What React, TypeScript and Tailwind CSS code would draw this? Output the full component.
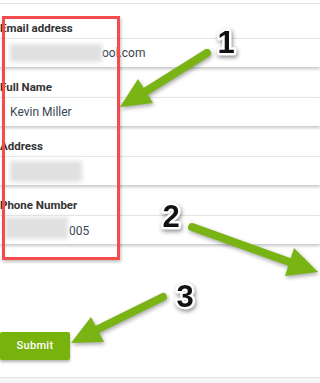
import React from 'react';

const fields = [
  { label: 'Email address', kind: 'email' },
  { label: 'Full Name', kind: 'name' },
  { label: 'Address', kind: 'address' },
  { label: 'Phone Number', kind: 'phone' },
];

// redacted bits of the screenshot
function FieldValue({ kind }: { kind: string }) {
  if (kind === 'email') {
    return (
      <div className="flex h-full items-center pl-[10px]">
        <div className="w-[92px] h-[18px] bg-[#e0e0e0] blur-[2px]" />
        <span>ool.com</span>
      </div>
    );
  }
  if (kind === 'name') {
    return (
      <div className="flex h-full items-center pl-[10px]">
        <span>Kevin Miller</span>
      </div>
    );
  }
  if (kind === 'address') {
    return (
      <div className="flex h-full items-center pl-[10px]">
        <div className="w-[72px] h-[21px] bg-[#e0e0e0] blur-[2px]" />
      </div>
    );
  }
  return (
    <div className="flex h-full items-center pl-[5px]">
      <div className="self-start mt-[1px] w-[63px] h-[22px] bg-[#e0e0e0] blur-[2px]" />
      <span className="ml-[1px] mt-[2px]">005</span>
    </div>
  );
}

function Arrow({ tail, tip, head }: { tail: [number, number]; tip: [number, number]; head: string }) {
  return (
    <g>
      <line x1={tail[0]} y1={tail[1]} x2={tip[0]} y2={tip[1]} stroke="#79b414" strokeWidth="8" strokeLinecap="round" />
      <polygon points={head} fill="#79b414" />
    </g>
  );
}

export default function App() {
  return (
    <div className="relative w-[320px] h-[383px] overflow-hidden bg-white font-['Roboto',sans-serif] flex flex-col">
      <div className="h-[4px] border-b border-[#e2e2e2]" />

      <form className="flex flex-col">
        {fields.map((f, i) => (
          <div key={f.label} className={`flex flex-col gap-[3px] ${i === 0 ? 'mt-[17px]' : 'mt-[13px]'}`}>
            <label className="h-[14px] leading-[14px] text-[11.5px] font-bold text-[#333]">{f.label}</label>
            <div className="h-[29px] bg-white border-t border-[#e6e6e6] shadow-[0_2px_3px_rgba(0,0,0,0.22)] text-[12px] text-[#3a4652]">
              <FieldValue kind={f.kind} />
            </div>
          </div>
        ))}

        <button
          type="button"
          className="mt-[88px] w-[70px] h-[28px] rounded-[2px] bg-[#77b30c] text-white text-[11px] font-medium tracking-[0.3px] shadow-[0_2px_3px_rgba(0,0,0,0.3)]"
        >
          Submit
        </button>
      </form>

      <div className="mt-[17px] flex-1 border-t border-[#e0e0e0] bg-[#f5f5f5]" />

      {/* red highlight box */}
      <div className="absolute left-[2px] top-[16px] w-[118px] h-[244px] border-[3px] border-[#f44b4b] shadow-[1px_2px_3px_rgba(0,0,0,0.25)]" />

      {/* annotation arrows */}
      <svg className="absolute inset-0 pointer-events-none" width="320" height="383" viewBox="0 0 320 383">
        <g style={{ filter: 'drop-shadow(1px 2px 2px rgba(0,0,0,0.35))' }}>
          <Arrow tail={[207, 53]} tip={[140, 95]} head="120,107 138,79 153,103" />
          <Arrow tail={[192, 227]} tip={[295, 264]} head="318,272 294,248 285,276" />
          <Arrow tail={[163, 297]} tip={[92, 332]} head="71,343 91,317 104,342" />
        </g>
        <g
          style={{ filter: 'drop-shadow(1px 2px 2px rgba(0,0,0,0.45))' }}
          fontFamily="'Liberation Sans', Arial, sans-serif"
          fontWeight="bold"
          fontSize="31"
          fill="#111"
          stroke="#fff"
          strokeWidth="5"
          strokeLinejoin="round"
          paintOrder="stroke"
          textAnchor="middle"
        >
          <text x="226" y="53">1</text>
          <text x="171" y="227">2</text>
          <text x="185" y="307">3</text>
        </g>
      </svg>
    </div>
  );
}
